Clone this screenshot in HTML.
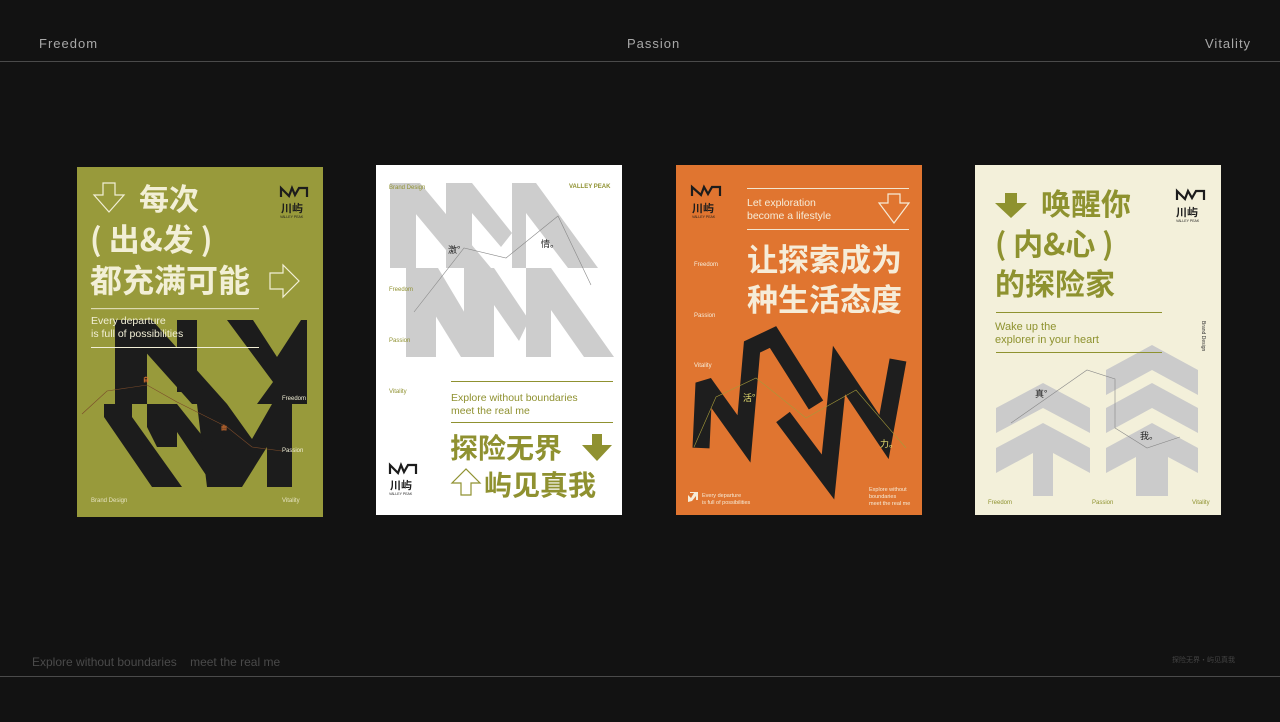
<!DOCTYPE html>
<html><head><meta charset="utf-8"><style>
*{margin:0;padding:0}
body{width:1280px;height:722px;background:#121212;position:relative;overflow:hidden;font-family:"Liberation Sans","Noto Sans CJK SC",sans-serif}
.h{position:absolute;top:36px;font-size:13px;color:#a8a8a8;letter-spacing:1px}
.ln{position:absolute;left:0;width:1280px;height:1px;background:#4a4a4a}
svg{position:absolute}
svg text{font-family:"Liberation Sans","Noto Sans CJK SC",sans-serif}
.cj{font-family:"Noto Sans CJK SC","WenQuanYi Zen Hei",sans-serif !important;font-weight:bold}
</style></head><body>
<div class="h" style="left:39px">Freedom</div>
<div class="h" style="left:627px">Passion</div>
<div class="h" style="left:1205px">Vitality</div>
<div class="ln" style="top:61px"></div>
<div style="position:absolute;left:32px;top:655px;font-size:12px;color:#4a4a4a">Explore without boundaries&nbsp;&nbsp;&nbsp;&nbsp;meet the real me</div>
<div style="position:absolute;left:1172px;top:655px;font-size:7px;color:#444;font-family:'Noto Sans CJK SC',sans-serif">探险无界·屿见真我</div>
<div class="ln" style="top:676px"></div>

<!-- Poster 1 -->
<svg style="left:77px;top:167px" width="246" height="350" viewBox="0 0 246 350">
<rect width="246" height="350" fill="#989a3b"/>
<g fill="#1c1c1c">
<polygon points="38,153 70,153 70,237 38,237"/>
<polygon points="40,153 75,153 150,237 115,237"/>
<polygon points="100,153 120,153 120,225 100,225"/>
<polygon points="150,153 176,153 200,190 224,153 230,153 230,237 205,237 180,237 196,215"/>
<polygon points="27,237 55,237 55,250 105,320 75,320 27,250"/>
<polygon points="70,237 100,237 150,300 137,320 100,265 100,280 80,280 70,260"/>
<polygon points="120,237 150,237 175,272 195,237 215,237 215,320 190,320 190,280 165,320 130,320"/>
</g>
<polyline points="5,247 30,224 70,218 100,235 150,260 175,280" fill="none" stroke="#7a4a2a" stroke-width="0.6"/>
<polyline points="175,280 205,284" fill="none" stroke="#7a4a2a" stroke-width="0.6"/>
<text x="66" y="215" font-size="6" fill="#e07530" class="cj">自</text>
<text x="144" y="263" font-size="6" fill="#e07530" class="cj">由</text>
<polygon points="26,16 38,16 38,28 47,28 32,45 17,28 26,28" fill="none" stroke="#f2efd6" stroke-width="1.2"/>
<text x="62" y="43" font-size="30" fill="#f2efd6" class="cj">每次</text>
<text x="13" y="84" font-size="31" fill="#f2efd6" class="cj" xml:space="preserve">( 出&amp;发 )</text>
<text x="13" y="125" font-size="32" fill="#f2efd6" class="cj">都充满可能</text>
<polygon points="193,106 206,106 206,98 222,114 206,130 206,122 193,122" fill="none" stroke="#f2efd6" stroke-width="1.2"/>
<polyline points="204,30 204,21 212,29 215,21 218,28 222,21 230,21 230,30" fill="none" stroke="#1c1c1c" stroke-width="2.2"/>
<text x="204" y="45" font-size="11" fill="#1c1c1c" class="cj">川屿</text>
<text x="203" y="51" font-size="3.5" fill="#1c1c1c">VALLEY PEAK</text>
<rect x="14" y="141" width="168" height="1.2" fill="#dcdab0"/>
<text x="14" y="157" font-size="10.5" fill="#f2efd6">Every departure</text>
<text x="14" y="170" font-size="10.5" fill="#f2efd6">is full of possibilities</text>
<rect x="14" y="180" width="168" height="1" fill="#f2efd6"/>
<text x="205" y="233" font-size="6" fill="#f2efd6">Freedom</text>
<text x="205" y="285" font-size="6" fill="#f2efd6">Passion</text>
<text x="14" y="335" font-size="6" fill="#e6e3c0">Brand Design</text>
<text x="205" y="335" font-size="6" fill="#e6e3c0">Vitality</text>
</svg>

<!-- Poster 2 -->
<svg style="left:376px;top:165px" width="246" height="350" viewBox="0 0 246 350">
<rect width="246" height="350" fill="#ffffff"/>
<g fill="#cdcdcd">
<polygon points="14,18 40,18 40,103 14,103"/>
<polygon points="14,18 44,18 115,103 85,103"/>
<polygon points="70,18 96,18 136,68 125,82 96,48 96,103 70,103"/>
<polygon points="136,18 160,18 222,103 192,103 150,48 150,103 136,103"/>
<polygon points="30,103 60,103 60,192 30,192"/>
<polygon points="30,103 62,103 115,192 85,192"/>
<polygon points="88,103 118,103 153,155 143,176 118,140 118,192 88,192"/>
<polygon points="150,103 175,103 238,192 208,192 175,145 175,192 150,192"/>
</g>
<polyline points="38,147 88,83 130,93 182,51 215,120" fill="none" stroke="#888" stroke-width="0.6"/>
<text x="72" y="88" font-size="9" fill="#222" class="cj" style="font-weight:normal">激°</text>
<text x="165" y="82" font-size="9" fill="#222" class="cj" style="font-weight:normal">情。</text>
<text x="13" y="24" font-size="6" fill="#8f9130">Brand Design</text>
<text x="193" y="23" font-size="6" fill="#8f9130" font-weight="bold">VALLEY PEAK</text>
<text x="13" y="126" font-size="6" fill="#8f9130">Freedom</text>
<text x="13" y="177" font-size="6" fill="#8f9130">Passion</text>
<text x="13" y="228" font-size="6" fill="#8f9130">Vitality</text>
<rect x="75" y="216" width="162" height="1" fill="#8f9130"/>
<text x="75" y="236" font-size="10.5" fill="#8f9130">Explore without boundaries</text>
<text x="75" y="249" font-size="10.5" fill="#8f9130">meet the real me</text>
<rect x="75" y="257" width="162" height="1" fill="#8f9130"/>
<text x="74" y="293" font-size="28" fill="#8f9130" class="cj">探险无界</text>
<polygon points="216,269 226,269 226,280 236,280 221,296 206,280 216,280" fill="#8f9130"/>
<polygon points="85,330 95,330 95,318 104,318 90,304 76,318 85,318" fill="none" stroke="#8f9130" stroke-width="1.2"/>
<text x="108" y="330" font-size="28" fill="#8f9130" class="cj">屿见真我</text>
<polyline points="14,309 14,300 22,308 25,300 28,307 32,300 40,300 40,309" fill="none" stroke="#1c1c1c" stroke-width="2.2"/>
<text x="14" y="324" font-size="11" fill="#1c1c1c" class="cj">川屿</text>
<text x="13" y="330" font-size="3.5" fill="#1c1c1c">VALLEY PEAK</text>
</svg>

<!-- Poster 3 -->
<svg style="left:676px;top:165px" width="246" height="350" viewBox="0 0 246 350">
<rect width="246" height="350" fill="#e07530"/>
<polyline points="16,31 16,22 25,30 28,22 32,29 36,22 44,22 44,31" fill="none" stroke="#1c1c1c" stroke-width="2.2"/>
<text x="16" y="47" font-size="11" fill="#1c1c1c" class="cj">川屿</text>
<text x="16" y="53" font-size="3.5" fill="#1c1c1c">VALLEY PEAK</text>
<rect x="71" y="23" width="162" height="1" fill="#f2e6d0"/>
<text x="71" y="41" font-size="10.5" fill="#f6ecd8">Let exploration</text>
<text x="71" y="54" font-size="10.5" fill="#f6ecd8">become a lifestyle</text>
<polygon points="212,29 224,29 224,38 233,38 218,58 203,38 212,38" fill="none" stroke="#f6ecd8" stroke-width="1.2"/>
<rect x="71" y="64" width="162" height="1" fill="#f2e6d0"/>
<text x="71" y="106" font-size="31" fill="#f6ecd8" class="cj">让探索成为</text>
<text x="71" y="146" font-size="31" fill="#f6ecd8" class="cj">种生活态度</text>
<text x="18" y="101" font-size="6" fill="#f6ecd8">Freedom</text>
<text x="18" y="152" font-size="6" fill="#f6ecd8">Passion</text>
<text x="18" y="202" font-size="6" fill="#f6ecd8">Vitality</text>
<g fill="none" stroke="#1e1e1e" stroke-width="17" stroke-linejoin="miter" stroke-miterlimit="3">
<polyline points="25,283 28,218 68,274 76,182 97,172 140,240"/>
<polyline points="107,252 152,312 163,205 208,272 222,195"/>
</g>
<polyline points="18,282 40,232 80,213 130,253 180,225 230,283" fill="none" stroke="#a59a3a" stroke-width="0.6"/>
<text x="67" y="236" font-size="9" fill="#e8e070" class="cj" style="font-weight:normal">活°</text>
<text x="204" y="282" font-size="9" fill="#e8e070" class="cj" style="font-weight:normal">力。</text>
<polygon points="12,337 12,330 15,333 18,328 14,328 14,327 22,327 22,335 20,335 20,331 16,336" fill="#f6ecd8"/>
<text x="26" y="332" font-size="5.5" fill="#f6ecd8">Every departure</text>
<text x="26" y="339" font-size="5.5" fill="#f6ecd8">is full of possibilities</text>
<text x="193" y="326" font-size="5.5" fill="#f6ecd8">Explore without</text>
<text x="193" y="333" font-size="5.5" fill="#f6ecd8">boundaries</text>
<text x="193" y="340" font-size="5.5" fill="#f6ecd8">meet the real me</text>
</svg>

<!-- Poster 4 -->
<svg style="left:975px;top:165px" width="246" height="350" viewBox="0 0 246 350">
<rect width="246" height="350" fill="#f3f0da"/>
<g fill="#cbcbcb">
<polygon points="21,243 68,218 115,243 115,268 68,243 21,268"/>
<polygon points="21,283 68,258 115,283 115,308 78,288 78,331 58,331 58,288 21,308"/>
<polygon points="131,205 177,180 223,205 223,230 177,205 131,230"/>
<polygon points="131,243 177,218 223,243 223,268 177,243 131,268"/>
<polygon points="131,283 177,258 223,283 223,308 193,292 193,331 161,331 161,292 131,308"/>
</g>
<polyline points="36,258 112,205 140,214 140,263 172,283 205,272" fill="none" stroke="#888" stroke-width="0.6"/>
<text x="60" y="232" font-size="9" fill="#222" class="cj" style="font-weight:normal">真°</text>
<text x="165" y="274" font-size="9" fill="#222" class="cj" style="font-weight:normal">我。</text>
<polygon points="30,28 42,28 42,38 52,38 36,53 20,38 30,38" fill="#8e922f"/>
<text x="66" y="50" font-size="30" fill="#8e922f" class="cj">唤醒你</text>
<text x="20" y="90" font-size="30" fill="#8e922f" class="cj" xml:space="preserve">( 内&amp;心 )</text>
<text x="20" y="130" font-size="30" fill="#8e922f" class="cj">的探险家</text>
<polyline points="202,35 202,26 210,34 213,26 217,33 221,26 229,26 229,35" fill="none" stroke="#1c1c1c" stroke-width="2.2"/>
<text x="201" y="51" font-size="11" fill="#1c1c1c" class="cj">川屿</text>
<text x="201" y="57" font-size="3.5" fill="#1c1c1c">VALLEY PEAK</text>
<rect x="21" y="147" width="166" height="1" fill="#8e922f"/>
<text x="20" y="165" font-size="11" fill="#8e922f">Wake up the</text>
<text x="20" y="178" font-size="11" fill="#8e922f">explorer in your heart</text>
<rect x="21" y="187" width="166" height="1" fill="#8e922f"/>
<text x="0" y="0" font-size="5" fill="#333" transform="translate(227,156) rotate(90)">Brand Design</text>
<text x="13" y="339" font-size="6" fill="#8e922f">Freedom</text>
<text x="117" y="339" font-size="6" fill="#8e922f">Passion</text>
<text x="217" y="339" font-size="6" fill="#8e922f">Vitality</text>
</svg>
</body></html>
